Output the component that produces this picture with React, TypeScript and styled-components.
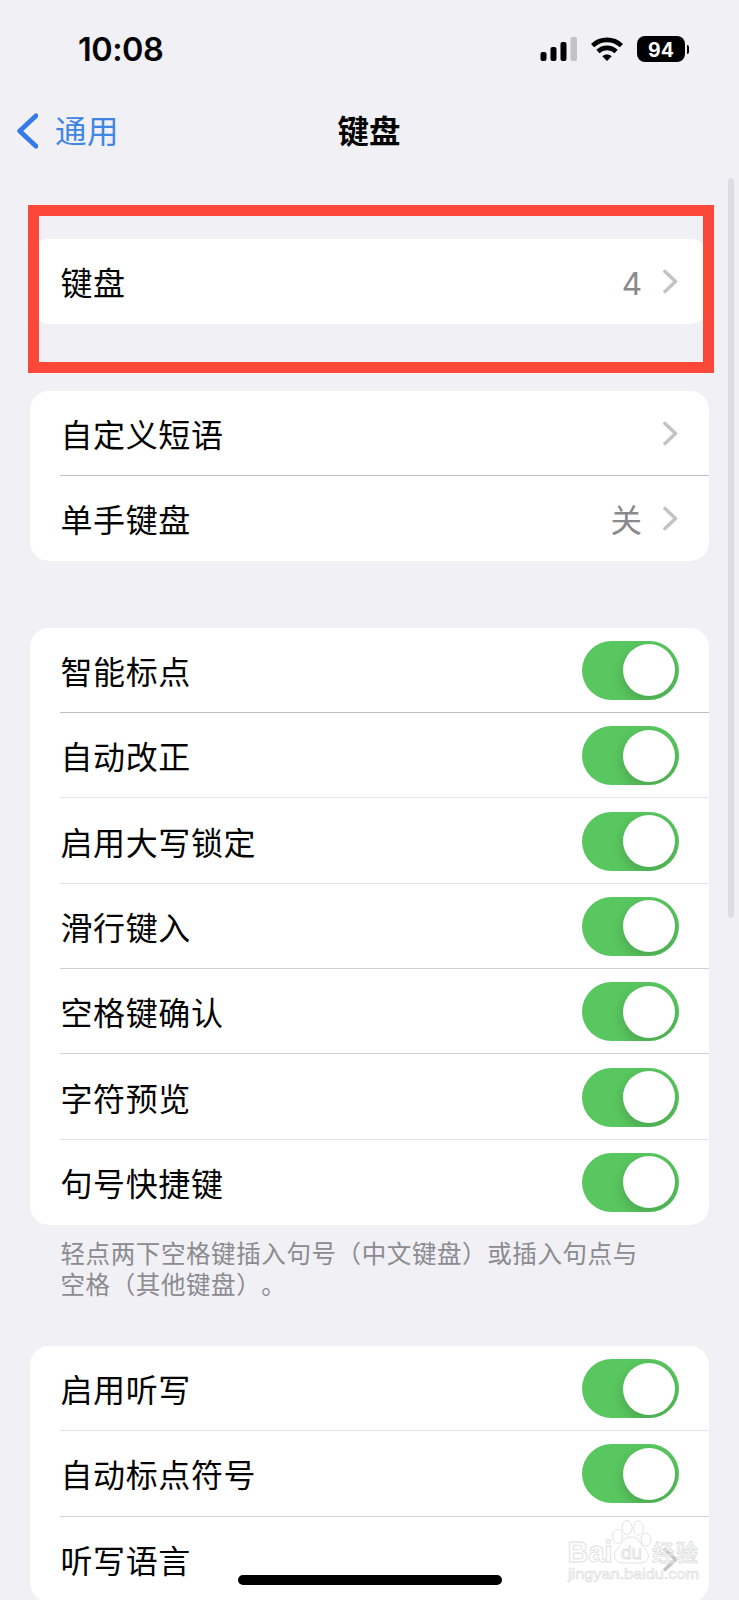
import React from "react";
import styled, { createGlobalStyle } from "styled-components";

const GlobalStyle = createGlobalStyle`
  body { margin: 0; background: #f0f0f5; }
  * { box-sizing: border-box; }
`;

const Screen = styled.main`
  position: relative;
  width: 739px;
  height: 1600px;
  overflow: hidden;
  background: #f0f0f5;
  color: #050505;
  font-family: Inter, "Noto Sans CJK SC", sans-serif;
`;

const StatusBar = styled.header`
  display: flex;
  align-items: center;
  justify-content: space-between;
  height: 98px;
  padding: 0 50px 0 78px;
`;

const Clock = styled.time`
  padding-top: 2px;
  font-size: 32.5px;
  font-weight: 600;
  letter-spacing: -0.5px;
  line-height: 40px;
`;

const StatusIcons = styled.div`
  display: flex;
  align-items: center;
`;

const SignalIcon = styled.svg`
  width: 37px;
  height: 24px;
  margin-right: 14px;
`;

const WifiIcon = styled.svg`
  width: 32px;
  height: 25px;
  margin-right: 14px;
`;

const Battery = styled.div`
  display: flex;
  align-items: center;
  gap: 2px;
`;

const BatteryBody = styled.span`
  display: flex;
  align-items: center;
  justify-content: center;
  width: 48px;
  height: 26px;
  padding-top: 1px;
  border-radius: 8px;
  background: #000;
  color: #fff;
  font-size: 19.5px;
  font-weight: 700;
`;

const BatteryCap = styled.span`
  width: 2px;
  height: 9px;
  border-radius: 0 3px 3px 0;
  background: #000;
`;

const NavBar = styled.nav`
  display: grid;
  grid-template-columns: 1fr auto 1fr;
  align-items: center;
  height: 66px;
  padding: 0 17px 0 16px;
`;

const BackLink = styled.a`
  display: flex;
  align-items: center;
  gap: 17px;
  color: #3f86e2;
  font-size: 31.5px;
  letter-spacing: 0.5px;
`;

const BackText = styled.span`
  padding-bottom: 4px;
`;

const BackIcon = styled.svg`
  width: 22px;
  height: 36px;
`;

const Title = styled.h1`
  margin: 0;
  padding-bottom: 4px;
  font-size: 31.5px;
  font-weight: 700;
  letter-spacing: 0;
`;

const Content = styled.div`
  display: flex;
  flex-direction: column;
  gap: 66.4px;
  padding: 75px 30px 0 30px;
`;

const Card = styled.section`
  border-radius: 19px;
  background: #fff;
`;

const separatorTones = { strong: "#bfbfc1", medium: "#d0d0d2", soft: "#e4e4e6" };
type Tone = keyof typeof separatorTones;

const Row = styled.div`
  display: flex;
  height: 85.33px;
  padding-left: 30px;
`;

const RowBody = styled.div<{ $tone?: Tone }>`
  display: flex;
  flex: 1;
  align-items: center;
  justify-content: space-between;
  padding-right: 30px;
  box-shadow: ${(p) => (p.$tone ? `inset 0 -1px 0 ${separatorTones[p.$tone]}` : "none")};
`;

const Label = styled.span`
  padding-bottom: 1px;
  padding-left: 0.5px;
  font-size: 32px;
  font-weight: 400;
  letter-spacing: 0.6px;
`;

const Accessory = styled.span`
  display: flex;
  align-items: center;
  gap: 21px;
  padding-right: 1px;
`;

const Value = styled.span<{ $numeric?: boolean }>`
  padding-top: ${(p) => (p.$numeric ? "3px" : "0")};
  padding-bottom: ${(p) => (p.$numeric ? "0" : "1px")};
  color: #8a8a8d;
  font-size: 31.5px;
`;

const ChevronIcon = styled.svg`
  width: 15px;
  height: 25px;
`;

const Track = styled.span`
  display: flex;
  justify-content: flex-end;
  align-items: center;
  width: 97px;
  height: 59px;
  padding-right: 4px;
  border-radius: 30px;
  background: #59c75f;
  overflow: hidden;
`;

const Knob = styled.span`
  width: 52px;
  height: 52px;
  border-radius: 50%;
  background: #fff;
  box-shadow: 0 5px 13px rgba(0, 0, 0, 0.18);
`;

const Footnote = styled.p`
  width: 600px;
  margin: -52.4px 0 -21px 30.5px;
  color: #8b8b90;
  font-size: 24.5px;
  letter-spacing: 0.6px;
  line-height: 30.7px;
  white-space: nowrap;
  text-spacing-trim: space-all;
`;

const Highlight = styled.div`
  position: absolute;
  left: 28px;
  top: 205px;
  width: 686px;
  height: 168px;
  border: 11px solid #fb4839;
`;

const ScrollThumb = styled.div`
  position: absolute;
  left: 728px;
  top: 178px;
  width: 6px;
  height: 740px;
  border-radius: 3px;
  background: #dddce2;
`;

const HomeIndicator = styled.div`
  position: absolute;
  left: 238px;
  top: 1575px;
  width: 264px;
  height: 10px;
  border-radius: 5px;
  background: #000;
`;

const Watermark = styled.svg`
  position: absolute;
  left: 560px;
  top: 1515px;
  width: 150px;
  height: 75px;
`;

const Chevron = () => (
  <ChevronIcon viewBox="0 0 15 25" fill="none">
    <path d="M2 2.500 12.500 12.500 2 22.500" stroke="#c3c3c5" strokeWidth="3.6" strokeLinecap="round" strokeLinejoin="round" />
  </ChevronIcon>
);

type Item = { label: string; kind: "link" | "switch"; value?: string; tone?: Tone };

const SettingRow = ({ label, kind, value, tone }: Item) => (
  <Row>
    <RowBody $tone={tone}>
      <Label>{label}</Label>
      {kind === "switch" ? (
        <Track role="switch" aria-checked="true">
          <Knob />
        </Track>
      ) : (
        <Accessory>
          {value && <Value $numeric={/^\d+$/.test(value)}>{value}</Value>}
          <Chevron />
        </Accessory>
      )}
    </RowBody>
  </Row>
);

const Group = ({ items }: { items: Item[] }) => (
  <Card>
    {items.map((item) => (
      <SettingRow key={item.label} {...item} />
    ))}
  </Card>
);

const keyboards: Item[] = [{ label: "键盘", kind: "link", value: "4" }];

const phrases: Item[] = [
  { label: "自定义短语", kind: "link", tone: "strong" },
  { label: "单手键盘", kind: "link", value: "关" },
];

const typing: Item[] = [
  { label: "智能标点", kind: "switch", tone: "strong" },
  { label: "自动改正", kind: "switch", tone: "soft" },
  { label: "启用大写锁定", kind: "switch", tone: "soft" },
  { label: "滑行键入", kind: "switch", tone: "medium" },
  { label: "空格键确认", kind: "switch", tone: "medium" },
  { label: "字符预览", kind: "switch", tone: "soft" },
  { label: "句号快捷键", kind: "switch" },
];

const dictation: Item[] = [
  { label: "启用听写", kind: "switch", tone: "soft" },
  { label: "自动标点符号", kind: "switch", tone: "medium" },
  { label: "听写语言", kind: "link" },
];

export default function App() {
  return (
    <Screen>
      <GlobalStyle />
      <StatusBar>
        <Clock>10:08</Clock>
        <StatusIcons>
          <SignalIcon viewBox="0 0 37 24">
            <rect x="0.500" y="15" width="6" height="9" rx="2" />
            <rect x="10.500" y="10" width="6" height="14" rx="2" />
            <rect x="20.500" y="5" width="6" height="19" rx="2" />
            <rect x="30.500" y="0" width="6.500" height="24" rx="2" fill="#c3c3c7" />
          </SignalIcon>
          <WifiIcon viewBox="0 0 32 25" fill="none" stroke="#000" strokeWidth="4.6">
            <path d="M1.6 8.6C9.6 .9 22.4 .9 30.4 8.6" />
            <path d="M6.9 14.5C12 9.7 20 9.7 25.1 14.5" />
            <path d="M11.3 19.3C13.8 16.9 18.2 16.9 20.7 19.3L16 24Z" fill="#000" stroke="none" />
          </WifiIcon>
          <Battery>
            <BatteryBody>94</BatteryBody>
            <BatteryCap />
          </Battery>
        </StatusIcons>
      </StatusBar>
      <NavBar>
        <BackLink>
          <BackIcon viewBox="0 0 22 36" fill="none">
            <path d="M20 2.8 3.700 18 20 33.2" stroke="#357be8" strokeWidth="4.8" strokeLinecap="round" strokeLinejoin="round" />
          </BackIcon>
          <BackText>通用</BackText>
        </BackLink>
        <Title>键盘</Title>
      </NavBar>
      <Content>
        <Group items={keyboards} />
        <Group items={phrases} />
        <Group items={typing} />
        <Footnote>
          轻点两下空格键插入句号（中文键盘）或插入句点与
          <br />
          空格（其他键盘）。
        </Footnote>
        <Group items={dictation} />
      </Content>
      <Highlight />
      <ScrollThumb />
      <Watermark viewBox="0 0 150 75" fill="#fff" fillOpacity=".4" stroke="#dedede" strokeWidth=".9" fontFamily="'Liberation Sans', 'Noto Sans CJK SC', sans-serif" fontWeight="700">
        <text x="7.500" y="46.500" fontSize="30" textLength="45" lengthAdjust="spacingAndGlyphs">Bai</text>
        <ellipse cx="57.500" cy="21.500" rx="5" ry="7" />
        <ellipse cx="67" cy="12.500" rx="5" ry="7" />
        <ellipse cx="78.500" cy="13" rx="5" ry="7" />
        <ellipse cx="86" cy="24.500" rx="5" ry="6.500" />
        <path d="M71 22C63 22 63 28 57 34C51 41 56 48 64 48H80C89 48 91 40 85 34C80 29 79 22 71 22Z" />
        <text x="61" y="43.500" fontSize="19" fontWeight="400" textLength="21">du</text>
        <text x="92" y="46" fontSize="22.500" fontWeight="500" textLength="46">经验</text>
        <text x="8" y="63.500" fontSize="15.500" fontWeight="400" strokeWidth=".7" textLength="131" lengthAdjust="spacingAndGlyphs">jingyan.baidu.com</text>
      </Watermark>
      <HomeIndicator />
    </Screen>
  );
}
